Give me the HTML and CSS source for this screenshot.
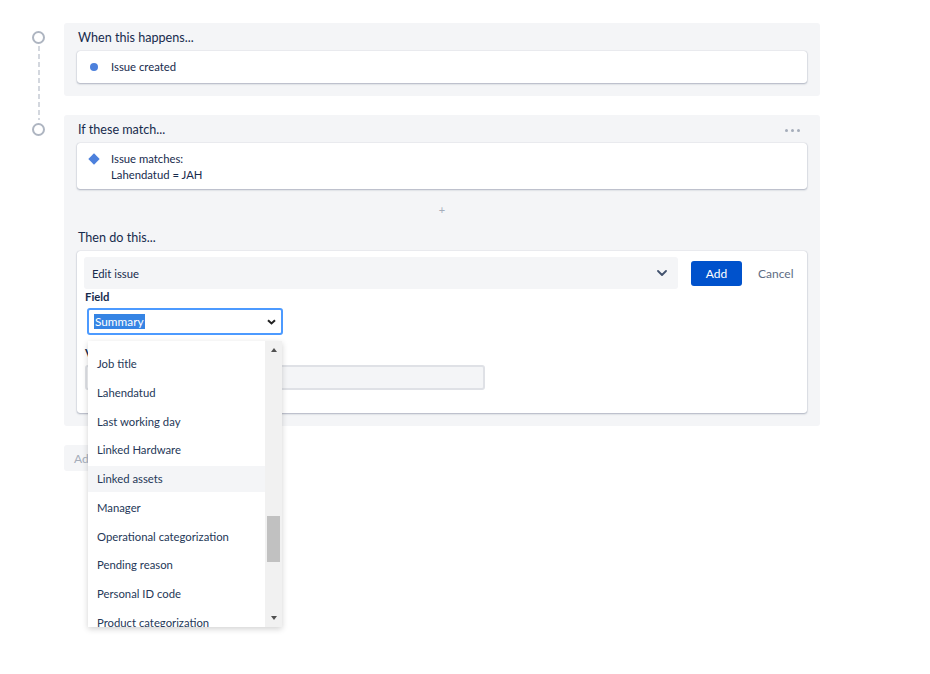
FILE: index.html
```html
<!DOCTYPE html>
<html lang="en">
<head>
<meta charset="utf-8">
<title>Rule editor</title>
<link rel="stylesheet" href="styles.css">
</head>
<body>
<div class="page">
  <div class="flow">
    <div class="rail">
      <span class="node"></span>
      <span class="dash"></span>
    </div>
    <section class="step">
      <div class="step-head"><h2 class="step-title">When this happens...</h2></div>
      <div class="card card-row"><span class="dot"></span><span>Issue created</span></div>
    </section>

    <div class="rail">
      <span class="node"></span>
    </div>
    <section class="step">
      <div class="step-head">
        <h2 class="step-title">If these match...</h2>
        <span class="more"><i></i><i></i><i></i></span>
      </div>
      <div class="card card-row cond"><span class="diamond"></span><div>Issue matches:<br>Lahendatud = JAH</div></div>
      <div class="add-between">+</div>
      <div class="step-head"><h2 class="step-title">Then do this...</h2></div>
      <div class="card action">
        <div class="action-bar">
          <div class="action-select">
            <span>Edit issue</span>
            <svg class="chev" width="10" height="6" viewBox="0 0 10 6"><path d="M1 1l4 4 4-4" fill="none" stroke="#42526e" stroke-width="1.8" stroke-linecap="round" stroke-linejoin="round"/></svg>
          </div>
          <button class="btn-primary">Add</button>
          <button class="btn-link">Cancel</button>
        </div>
        <div class="form">
          <label class="label">Field</label>
          <div class="field-wrap">
            <div class="field-select">
              <span class="sel">Summary</span>
              <svg width="9" height="6" viewBox="0 0 9 6"><path d="M1 1.2l3.5 3.3 3.5-3.3" fill="none" stroke="#222" stroke-width="2"/></svg>
            </div>
            <div class="dropdown">
              <ul class="options">
                <li class="option">Job title</li>
                <li class="option">Lahendatud</li>
                <li class="option">Last working day</li>
                <li class="option">Linked Hardware</li>
                <li class="option hover">Linked assets</li>
                <li class="option">Manager</li>
                <li class="option">Operational categorization</li>
                <li class="option">Pending reason</li>
                <li class="option">Personal ID code</li>
                <li class="option">Product categorization</li>
              </ul>
              <div class="scrollbar">
                <span class="arrow up"></span>
                <span class="thumb"></span>
                <span class="spacer"></span>
                <span class="arrow down"></span>
              </div>
            </div>
          </div>
          <label class="label value-label">Value</label>
          <div class="input"></div>
        </div>
      </div>
    </section>
  </div>
  <button class="add-component">Add component</button>
</div>
</body>
</html>
```

FILE: styles.css
```css
* { box-sizing: border-box; }

html, body {
  margin: 0;
  min-height: 100%;
}

body {
  font-family: Lato, "Noto Sans", sans-serif;
  color: #172b4d;
  background: #fff;
}

.page {
  padding-top: 23px;
  width: 930px;
  min-height: 674px;
}

.flow {
  display: grid;
  grid-template-columns: 64px 756px;
  row-gap: 19px;
}

.rail {
  display: flex;
  flex-direction: column;
  padding-left: 32px;
}

.node {
  flex: none;
  width: 13px;
  height: 13px;
  margin-top: 8px;
  border: 2px solid #aeb5c1;
  border-radius: 50%;
}

.dash {
  flex: 1;
  width: 2px;
  margin: 2px 0 -24px 5.5px;
  background: repeating-linear-gradient(to bottom, #d3d7de 0 5px, transparent 5px 8px);
}

.step {
  background: #f4f5f7;
  border-radius: 3px;
  padding: 5px 13px 13px;
}

.step-head {
  display: flex;
  align-items: center;
  justify-content: space-between;
  margin-bottom: 3px;
}

.step-title {
  margin: 0 0 0 1px;
  font-size: 12.6px;
  font-weight: 400;
  line-height: 20px;
}

.more {
  display: flex;
  gap: 3px;
  margin-right: 7px;
}

.more i {
  width: 3px;
  height: 3px;
  border-radius: 50%;
  background: #a5adba;
}

.card {
  background: #fff;
  border-radius: 3px;
  box-shadow: 0 1px 2px rgba(9, 30, 66, 0.28), 0 0 1px rgba(9, 30, 66, 0.31);
}

.card-row {
  display: flex;
  align-items: flex-start;
  gap: 13px;
  padding: 8px 13px;
  font-size: 11.3px;
  line-height: 16px;
}

.cond { padding-bottom: 6px; }

.dot {
  flex: none;
  width: 8px;
  height: 8px;
  margin-top: 4px;
  border-radius: 50%;
  background: #4c80dc;
}

.diamond {
  flex: none;
  width: 8px;
  height: 8px;
  margin-top: 4px;
  background: #4c80dc;
  transform: rotate(45deg);
}

.add-between {
  height: 39px;
  display: flex;
  align-items: center;
  justify-content: center;
  padding-top: 2px;
  color: #a5adba;
  font-size: 11px;
}

.action {
  padding: 6px 7px 23px;
}

.action-bar {
  display: flex;
  align-items: center;
}

.action-select {
  flex: 1;
  height: 32px;
  display: flex;
  align-items: center;
  justify-content: space-between;
  padding: 0 11px 0 8px;
  background: #f4f5f7;
  border-radius: 3px;
  font-size: 11.3px;
}

.btn-primary {
  margin-left: 13px;
  width: 51px;
  height: 25px;
  border: 0;
  border-radius: 3px;
  background: #0052cc;
  color: #fff;
  font-family: inherit;
  font-size: 12px;
  padding: 0;
}

.btn-link {
  margin: 0 9px 0 16px;
  width: 33px;
  padding: 0;
  border: 0;
  background: none;
  color: #5e6c84;
  font-family: inherit;
  font-size: 12px;
  text-align: left;
}

.form {
  padding-left: 1px;
}

.label {
  display: block;
  font-size: 11.3px;
  font-weight: 700;
  line-height: 16px;
}

.field-wrap {
  position: relative;
  width: 196px;
  margin: 3px 0 0 2px;
}

.field-select {
  height: 27px;
  display: flex;
  align-items: center;
  justify-content: space-between;
  padding: 0 5px;
  border: 2px solid #4c9aff;
  border-radius: 3px;
  background: #fff;
}

.sel {
  background: #3584e4;
  color: #fff;
  font-size: 11.8px;
  line-height: 15px;
  padding: 0 1px;
}

.dropdown {
  position: absolute;
  top: calc(100% + 6px);
  left: 1px;
  z-index: 2;
  width: 194px;
  height: 286px;
  display: flex;
  overflow: hidden;
  background: #fff;
  box-shadow: 0 2px 6px rgba(0, 0, 0, 0.18);
}

.options {
  flex: 1;
  margin: 0;
  padding: 10px 0 0;
  list-style: none;
}

.option {
  height: 26px;
  line-height: 26px;
  margin-bottom: 2.75px;
  padding-left: 9px;
  font-size: 11.3px;
  color: #253858;
  white-space: nowrap;
}

.option.hover { background: #f4f5f7; }

.scrollbar {
  flex: none;
  width: 17px;
  display: flex;
  flex-direction: column;
  align-items: center;
  background: #f1f1f1;
}

.arrow {
  width: 0;
  height: 0;
  border-left: 3.5px solid transparent;
  border-right: 3.5px solid transparent;
}

.arrow.up {
  margin-top: 7px;
  border-bottom: 4px solid #505050;
}

.arrow.down {
  margin-bottom: 7px;
  border-top: 4px solid #505050;
}

.thumb {
  width: 13px;
  height: 46px;
  margin-top: 164px;
  background: #c1c1c1;
}

.spacer { flex: 1; }

.value-label {
  margin-top: 10px;
}

.input {
  width: 400px;
  height: 25px;
  margin-top: 4px;
  background: #f4f5f7;
  border: 2px solid #dfe1e6;
  border-radius: 3px;
}

.add-component {
  display: block;
  margin: 19px 0 0 64px;
  height: 26px;
  padding: 0 10px;
  border: 0;
  border-radius: 3px;
  background: #f4f5f7;
  color: #a5adba;
  font-family: inherit;
  font-size: 12px;
}
```
